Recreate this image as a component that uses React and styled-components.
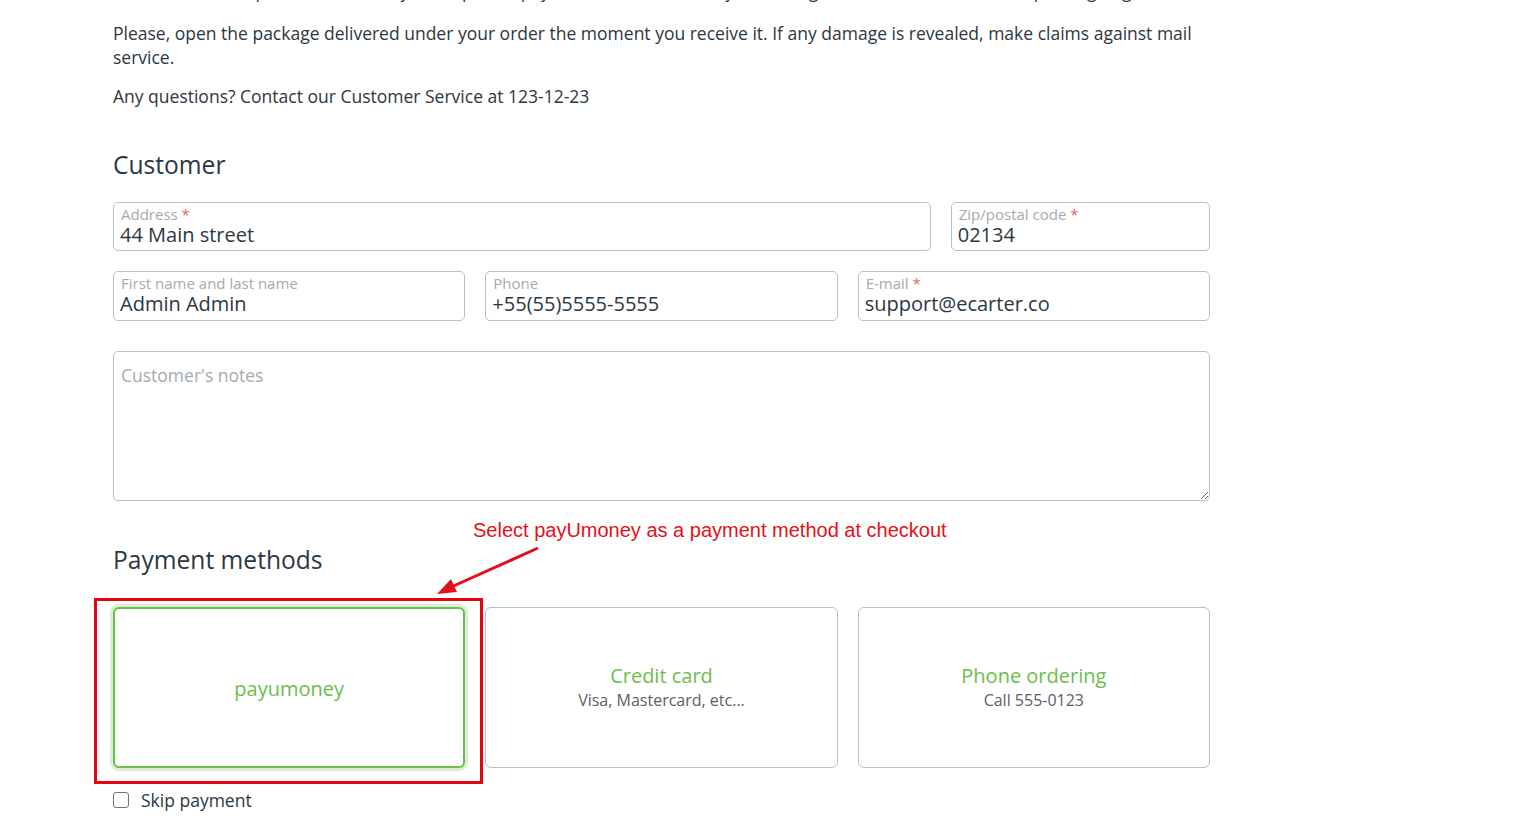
import styled, { createGlobalStyle } from "styled-components";

const Global = createGlobalStyle`
    html, body{
        margin: 0;
        padding: 0;
        background: #ffffff;
        font-family: "Open Sans", "Noto Sans", sans-serif;
        color: #2b3743;
        overflow: hidden;
    }
    *{ box-sizing: border-box; }
`

const Pagina = styled.main`
    width: 1097px;
    margin: -21px 0 0 113px;
`

const Paragrafo = styled.p`
    margin: 0 0 ${props => props.cortado ? 18 : 15}px;
    font-size: 17.5px;
    line-height: 24px;
    color: #2b3743;
    white-space: ${props => props.cortado ? "nowrap" : "normal"};
`

const Titulo = styled.h2`
    margin: ${props => props.topo}px 0 0;
    font-size: 24.6px;
    line-height: 32px;
    font-weight: 400;
    color: #2b3743;
`

const Grade = styled.div`
    display: grid;
    grid-template-columns: repeat(${props => props.colunas}, 1fr);
    gap: 20px;
    margin-top: ${props => props.topo}px;
`

const Campo = styled.label`
    grid-column: span ${props => props.span || 1};
    display: flex;
    flex-direction: column;
    height: ${props => props.altura}px;
    padding: 3px 6px 0;
    border: 1px solid #b4c2cc;
    border-radius: 5px;
    background: #fff;

    .rotulo{
        font-size: 15px;
        line-height: 17px;
        color: #a3abb1;
        padding-left: 1px;
    }

    .rotulo b{
        font-weight: 400;
        color: #e06666;
    }

    .valor{
        font-size: 20px;
        line-height: 23px;
        color: #2b3743;
        white-space: nowrap;
    }
`

const Notas = styled.textarea`
    display: block;
    width: 100%;
    height: 150px;
    margin-top: 30px;
    padding: 11px 7px;
    border: 1px solid #b4c2cc;
    border-radius: 5px;
    font-family: "Open Sans", "Noto Sans", sans-serif;
    font-size: 17.5px;
    line-height: 24px;
    color: #2b3743;
    outline: none;

    &::placeholder{
        color: #a3abb1;
    }
`

const SecaoPagamento = styled.section`
    position: relative;
`

const Anotacao = styled.span`
    position: absolute;
    left: 360px;
    top: -26px;
    font-family: "Liberation Sans", Arial, sans-serif;
    font-size: 20px;
    line-height: 24px;
    color: #e3101b;
    white-space: nowrap;
`

const Seta = styled.svg`
    position: absolute;
    left: 300px;
    top: 0;
    overflow: visible;
`

const Destaque = styled.div`
    position: absolute;
    left: -19px;
    top: 54px;
    width: 389px;
    height: 186px;
    border: 3px solid #e5050f;
    pointer-events: none;
`

const CartaoPagamento = styled.button`
    height: 161px;
    display: flex;
    flex-direction: column;
    align-items: center;
    justify-content: center;
    background: #fff;
    border: ${props => props.ativo ? "2px solid #6cbd4c" : "1px solid #b4c2cc"};
    box-shadow: ${props => props.ativo ? "0 0 0 3px rgba(108, 189, 76, 0.25)" : "none"};
    border-radius: 6px;
    font-family: "Open Sans", "Noto Sans", sans-serif;
    cursor: pointer;

    .nome{
        font-size: 20px;
        line-height: 24px;
        color: #6cbd4c;
        margin-top: ${props => props.ativo ? "3px" : "0"};
    }

    .detalhe{
        font-size: 16px;
        line-height: 24px;
        color: #5a6068;
    }
`

const Pular = styled.label`
    display: flex;
    align-items: center;
    gap: 12px;
    margin-top: 20px;
    font-size: 17.5px;
    line-height: 24px;
    color: #2b3743;

    input{
        appearance: none;
        width: 16px;
        height: 16px;
        margin: 0;
        border: 1px solid #767676;
        border-radius: 3px;
        background: #fff;
    }
`

const metodos = [
    { nome: "payumoney", ativo: true },
    { nome: "Credit card", detalhe: "Visa, Mastercard, etc..." },
    { nome: "Phone ordering", detalhe: "Call 555-0123" },
]

const App = () => {
    return(
        <>
            <Global />
            <Pagina>
                <Paragrafo cortado>
                    Product return is possible at the buyer's expense: pay for the return delivery according to the carrier's tariffs and packing of goods.
                </Paragrafo>
                <Paragrafo>
                    Please, open the package delivered under your order the moment you receive it. If any damage is revealed, make claims against mail service.
                </Paragrafo>
                <Paragrafo>Any questions? Contact our Customer Service at 123-12-23</Paragrafo>

                <Titulo topo={41}>Customer</Titulo>
                <Grade colunas={4} topo={21}>
                    <Campo span={3} altura={49}>
                        <span className="rotulo">Address <b>*</b></span>
                        <span className="valor">44 Main street</span>
                    </Campo>
                    <Campo altura={49}>
                        <span className="rotulo">Zip/postal code <b>*</b></span>
                        <span className="valor">02134</span>
                    </Campo>
                </Grade>
                <Grade colunas={3} topo={20}>
                    <Campo altura={50}>
                        <span className="rotulo">First name and last name</span>
                        <span className="valor">Admin Admin</span>
                    </Campo>
                    <Campo altura={50}>
                        <span className="rotulo">Phone</span>
                        <span className="valor">+55(55)5555-5555</span>
                    </Campo>
                    <Campo altura={50}>
                        <span className="rotulo">E-mail <b>*</b></span>
                        <span className="valor">support@ecarter.co</span>
                    </Campo>
                </Grade>
                <Notas placeholder="Customer's notes" />

                <SecaoPagamento>
                    <Titulo topo={43}>Payment methods</Titulo>
                    <Anotacao>Select payUmoney as a payment method at checkout</Anotacao>
                    <Seta width="140" height="60">
                        <line x1="125" y1="4" x2="36" y2="44" stroke="#e3101b" strokeWidth="3" />
                        <polygon points="24,50 38,35 44,48" fill="#e3101b" />
                    </Seta>
                    <Grade colunas={3} topo={31}>
                        {metodos.map(metodo => (
                            <CartaoPagamento key={metodo.nome} ativo={metodo.ativo}>
                                <span className="nome">{metodo.nome}</span>
                                {metodo.detalhe ? <span className="detalhe">{metodo.detalhe}</span> : ''}
                            </CartaoPagamento>
                        ))}
                    </Grade>
                    <Destaque />
                    <Pular>
                        <input type="checkbox" />
                        Skip payment
                    </Pular>
                </SecaoPagamento>
            </Pagina>
        </>
    )
}

export default App;
